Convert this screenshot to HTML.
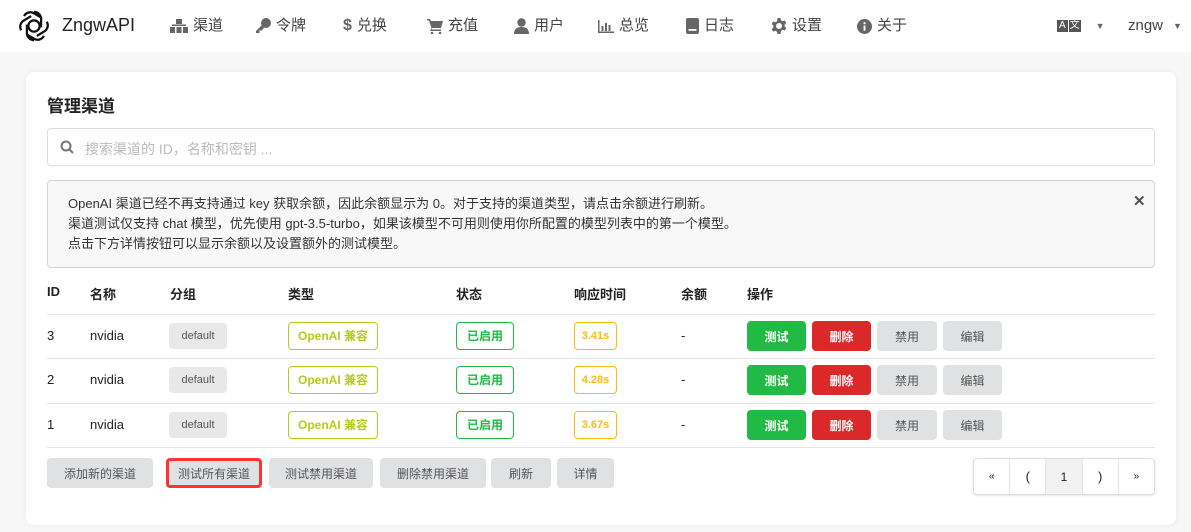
<!DOCTYPE html>
<html><head><meta charset="utf-8"><style>
*{box-sizing:border-box;margin:0;padding:0}
body{width:1191px;height:532px;overflow:hidden;background:#f7f7f7;font-family:"Liberation Sans","Noto Sans CJK SC",sans-serif;color:#222;font-size:13px;position:relative}
.hdr{position:absolute;left:0;top:0;width:1191px;height:52px;background:#fff}
.hdr .it{position:absolute;top:16px;font-size:15px;color:#444;display:flex;align-items:center;gap:5px;line-height:20px}
.hdr svg{fill:#666}
.card{position:absolute;left:26px;top:72px;width:1150px;height:453px;background:#fff;border-radius:8px;box-shadow:0 0 6px rgba(0,0,0,.06)}
.abs{position:absolute}
.lbl{position:absolute;height:28px;border-radius:4px;font-size:12px;display:flex;align-items:center;justify-content:center;font-weight:bold;line-height:1}
.btn{position:absolute;height:30px;border-radius:4px;font-size:12px;font-weight:bold;display:flex;align-items:center;justify-content:center;background:#e0e1e2;color:#555}
.line{position:absolute;left:47px;width:1108px;height:1px;background:#e5e5e5}
</style></head><body>
<div class="hdr">
<svg class="abs" style="left:17px;top:9px;fill:none" width="34" height="34" viewBox="0 0 24 24" stroke="#111" stroke-width="1.6"><circle cx="12" cy="12" r="4"/><path d="M12 2a5 5 0 0 1 5 5v6M21 9a5 5 0 0 1-2 7l-5 3M19 19a5 5 0 0 1-7 2l-5-3M12 22a5 5 0 0 1-5-5v-6M3 15a5 5 0 0 1 2-7l5-3M5 5a5 5 0 0 1 7-2l5 3"/></svg>
<div class="it" style="left:62px;top:15px;font-size:18px;color:#222">ZngwAPI</div>
<div class="it" style="left:170px"><svg width="18" height="14" viewBox="0 0 18 14"><rect x="6" y="0" width="6" height="5"/><rect x="0" y="8" width="5" height="6"/><rect x="6.5" y="8" width="5" height="6"/><rect x="13" y="8" width="5" height="6"/><rect x="2" y="5.5" width="14" height="1.5"/></svg>渠道</div>
<div class="it" style="left:255px"><svg width="16" height="16" viewBox="0 0 16 16"><circle cx="11" cy="5" r="5"/><path d="M7 7L1 13v2h3l1-1-1-1 1-1 1 1 3-3z"/></svg>令牌</div>
<div class="it" style="left:343px;color:#444"><b style="color:#666;font-size:16px">$</b> 兑换</div>
<div class="it" style="left:427px"><svg width="16" height="16" viewBox="0 0 16 16"><path d="M0 1h3l1 2h12l-2 7H5l-.5 1.5H14V13H3l1.5-3L2 2.5H0z"/><circle cx="5" cy="15" r="1.3"/><circle cx="13" cy="15" r="1.3"/></svg>充值</div>
<div class="it" style="left:514px"><svg width="15" height="16" viewBox="0 0 15 16"><circle cx="7.5" cy="4.5" r="4.2"/><path d="M0 16c0-5 3-7 7.5-7S15 11 15 16z"/></svg>用户</div>
<div class="it" style="left:598px"><svg width="16" height="13" viewBox="0 0 16 13"><path d="M0 0h1.5v11.5H16V13H0z"/><rect x="3.5" y="6" width="2" height="5"/><rect x="7" y="3" width="2" height="8"/><rect x="10.5" y="5" width="2" height="6"/></svg>总览</div>
<div class="it" style="left:686px"><svg width="13" height="16" viewBox="0 0 13 16"><rect x="0" y="0" width="13" height="16" rx="2"/><rect x="2.5" y="11" width="8" height="1.8" fill="#fff"/></svg>日志</div>
<div class="it" style="left:771px"><svg width="16" height="16" viewBox="0 0 16 16"><path d="M6.5 0h3l.5 2.3 1.6.9 2.2-.8 1.5 2.6-1.7 1.6v1.8l1.7 1.6-1.5 2.6-2.2-.8-1.6.9L9.5 16h-3L6 13.7l-1.6-.9-2.2.8L.7 11l1.7-1.6V7.6L.7 6l1.5-2.6 2.2.8L6 3.3zM8 5a3 3 0 1 0 0 6 3 3 0 0 0 0-6z"/></svg>设置</div>
<div class="it" style="left:857px"><svg width="15" height="15" viewBox="0 0 16 16"><circle cx="8" cy="8" r="8"/><rect x="7" y="7" width="2" height="5.5" fill="#fff"/><circle cx="8" cy="4.5" r="1.2" fill="#fff"/></svg>关于</div>
<div class="it" style="left:1057px;font-size:10px;gap:1px"><span style="background:#555;color:#fff;padding:0 2px;line-height:12px">A</span><span style="background:#555;color:#fff;padding:0 1px;line-height:12px">文</span><span style="font-size:9px;margin-left:14px;color:#666">▼</span></div>
<div class="it" style="left:1128px">zngw <span style="font-size:9px;margin-left:5px;color:#666">▼</span></div>
</div>
<div class="card"></div>
<div class="abs" style="left:47px;top:92px;font-size:17px;font-weight:bold">管理渠道</div>
<div class="abs" style="left:47px;top:128px;width:1108px;height:38px;border:1px solid #ddd;border-radius:4px;"></div>
<svg class="abs" style="left:60px;top:140px" width="14" height="14" viewBox="0 0 14 14" fill="none" stroke="#777" stroke-width="2"><circle cx="6" cy="6" r="4.5"/><path d="M9.5 9.5L13 13"/></svg>
<div class="abs" style="left:85px;top:139px;font-size:14px;color:#bbb">搜索渠道的 ID，名称和密钥 ...</div>
<div class="abs" style="left:47px;top:180px;width:1108px;height:88px;border:1px solid #d4d4d5;border-radius:4px;background:#f8f8f9;padding:13px 20px;font-size:13px;line-height:20px;color:#333">OpenAI 渠道已经不再支持通过 key 获取余额，因此余额显示为 0。对于支持的渠道类型，请点击余额进行刷新。<br>渠道测试仅支持 chat 模型，优先使用 gpt-3.5-turbo，如果该模型不可用则使用你所配置的模型列表中的第一个模型。<br>点击下方详情按钮可以显示余额以及设置额外的测试模型。</div>
<div class="abs" style="left:1133px;top:192px;font-size:15px;font-weight:bold;color:#555">✕</div>
<div class="abs" style="top:284px;left:47px;font-weight:bold">ID</div>
<div class="abs" style="top:284px;left:90px;font-weight:bold">名称</div>
<div class="abs" style="top:284px;left:170px;font-weight:bold">分组</div>
<div class="abs" style="top:284px;left:288px;font-weight:bold">类型</div>
<div class="abs" style="top:284px;left:456px;font-weight:bold">状态</div>
<div class="abs" style="top:284px;left:574px;font-weight:bold">响应时间</div>
<div class="abs" style="top:284px;left:681px;font-weight:bold">余额</div>
<div class="abs" style="top:284px;left:747px;font-weight:bold">操作</div>
<div class="line" style="top:314px"></div><div class="line" style="top:358px"></div><div class="line" style="top:403px"></div><div class="line" style="top:447px"></div>

<div id="rows"></div>
<script>
var d=[["3","3.41s",322],["2","4.28s",366],["1","3.67s",411]],h="";
d.forEach(function(r){var y=r[2];
h+='<div class="abs" style="left:47px;top:'+(y+6)+'px">'+r[0]+'</div><div class="abs" style="left:90px;top:'+(y+6)+'px">nvidia</div>'+
'<div class="lbl" style="left:169px;top:'+(y+1)+'px;width:58px;height:26px;background:#e8e8e8;color:#555;font-weight:normal;font-size:11px">default</div>'+
'<div class="lbl" style="left:288px;top:'+y+'px;width:90px;border:1px solid #b5cc18;color:#b5cc18">OpenAI 兼容</div>'+
'<div class="lbl" style="left:456px;top:'+y+'px;width:58px;border:1px solid #21ba45;color:#21ba45">已启用</div>'+
'<div class="lbl" style="left:574px;top:'+y+'px;width:43px;border:1px solid #fbbd08;color:#fbbd08;font-size:11px">'+r[1]+'</div>'+
'<div class="abs" style="left:681px;top:'+(y+6)+'px">-</div>'+
'<div class="btn" style="left:747px;top:'+(y-1)+'px;width:59px;background:#21ba45;color:#fff">测试</div>'+
'<div class="btn" style="left:812px;top:'+(y-1)+'px;width:59px;background:#db2828;color:#fff">删除</div>'+
'<div class="btn" style="left:877px;top:'+(y-1)+'px;width:60px;font-weight:normal">禁用</div>'+
'<div class="btn" style="left:943px;top:'+(y-1)+'px;width:59px;font-weight:normal">编辑</div>';});
document.getElementById('rows').innerHTML=h;
</script>
<div class="btn" style="left:47px;top:458px;width:106px;font-weight:normal">添加新的渠道</div>
<div class="btn" style="left:166px;top:458px;width:96px;font-weight:normal;border:3px solid #f33">测试所有渠道</div>
<div class="btn" style="left:269px;top:458px;width:104px;font-weight:normal">测试禁用渠道</div>
<div class="btn" style="left:380px;top:458px;width:106px;font-weight:normal">删除禁用渠道</div>
<div class="btn" style="left:491px;top:458px;width:60px;font-weight:normal">刷新</div>
<div class="btn" style="left:557px;top:458px;width:57px;font-weight:normal">详情</div>
<div class="abs" style="left:973px;top:458px;width:182px;height:37px;border:1px solid #ddd;border-radius:4px;display:flex;box-shadow:0 1px 2px rgba(0,0,0,.1)">
<div style="flex:1;display:flex;align-items:center;justify-content:center;font-size:10px;border-right:1px solid #e5e5e5">«</div>
<div style="flex:1;display:flex;align-items:center;justify-content:center;border-right:1px solid #e5e5e5">(</div>
<div style="flex:1;display:flex;align-items:center;justify-content:center;border-right:1px solid #e5e5e5;background:#f2f2f2;font-size:12px">1</div>
<div style="flex:1;display:flex;align-items:center;justify-content:center;border-right:1px solid #e5e5e5">)</div>
<div style="flex:1;display:flex;align-items:center;justify-content:center;font-size:10px">»</div>
</div>
</body></html>
